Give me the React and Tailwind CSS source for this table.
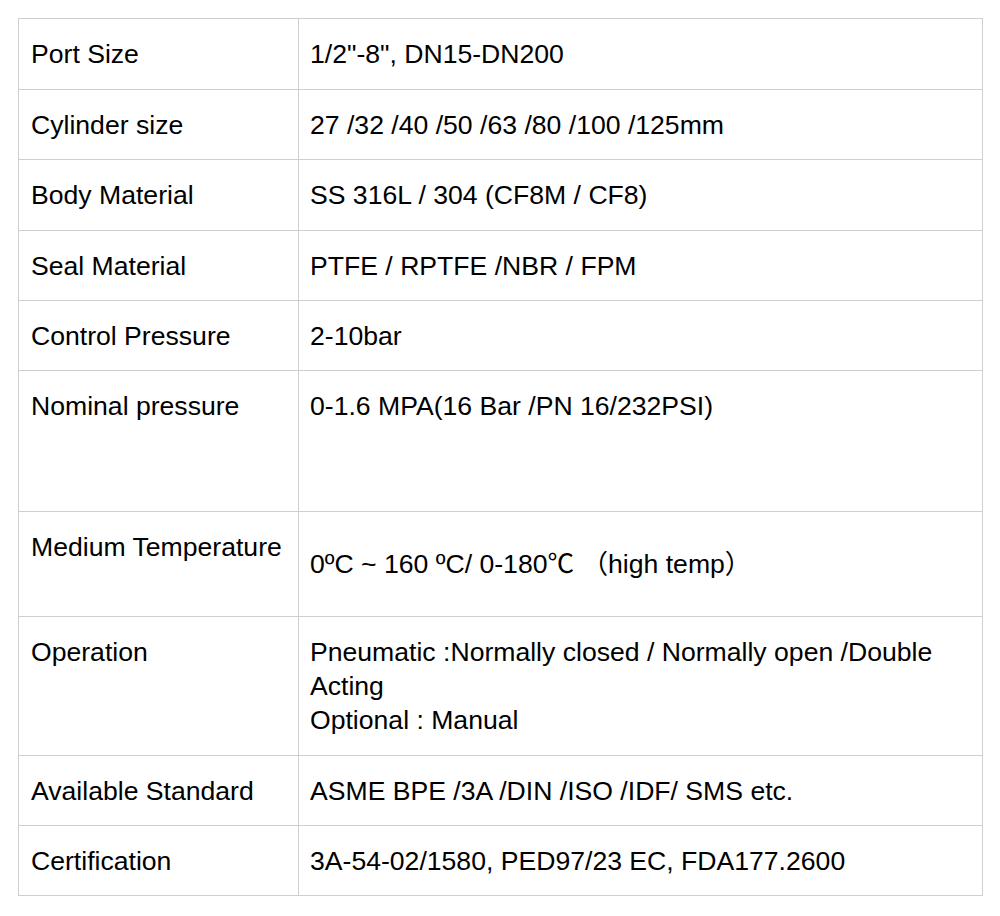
// Spec sheet table — two columns, label / value, light grey rules.

const rows = [
  { label: "Port Size", value: ['1/2"-8", DN15-DN200'], h: "h-[71px]" },
  { label: "Cylinder size", value: ["27 /32 /40 /50 /63 /80 /100 /125mm"], h: "h-[70px]" },
  { label: "Body Material", value: ["SS 316L / 304 (CF8M / CF8)"], h: "h-[71px]" },
  { label: "Seal Material", value: ["PTFE / RPTFE /NBR / FPM"], h: "h-[70px]" },
  { label: "Control Pressure", value: ["2-10bar"], h: "h-[70px]" },
  { label: "Nominal pressure", value: ["0-1.6 MPA(16 Bar /PN 16/232PSI)"], h: "h-[141px]" },
  {
    label: "Medium Temperature",
    value: ["0ºC ~ 160 ºC/ 0-180℃ （high temp）"],
    h: "h-[105px]",
    middle: true,
  },
  {
    label: "Operation",
    value: [
      "Pneumatic :Normally closed / Normally open /Double",
      "Acting",
      "Optional : Manual",
    ],
    h: "h-[139px]",
  },
  { label: "Available Standard", value: ["ASME BPE /3A /DIN /ISO /IDF/ SMS etc."], h: "h-[70px]" },
  { label: "Certification", value: ["3A-54-02/1580, PED97/23 EC, FDA177.2600"], h: "h-[70px]" },
];

export default function App() {
  return (
    <div
      className="min-h-[916px] w-[1000px] bg-white pt-[18px] pl-[18px] text-black"
      style={{ fontFamily: '"Liberation Sans", Arial, "Noto Sans CJK SC", sans-serif' }}
    >
      <table className="w-[965px] border-collapse text-[26.6px] leading-[34px]">
        <tbody>
          {rows.map((r) => (
            <tr key={r.label} className={r.h}>
              <td className="w-[280px] border border-[#cfcfcf] pl-[12px] pr-[8px] pt-[18px] align-top whitespace-nowrap">
                {r.label}
              </td>
              <td
                className={
                  r.middle
                    ? "border border-[#cfcfcf] pl-[11px] pr-[12px] align-middle"
                    : "border border-[#cfcfcf] pl-[11px] pr-[12px] pt-[18px] align-top"
                }
              >
                {r.value.map((line) => (
                  <div key={line} className="whitespace-nowrap">
                    {line}
                  </div>
                ))}
              </td>
            </tr>
          ))}
        </tbody>
      </table>
    </div>
  );
}
